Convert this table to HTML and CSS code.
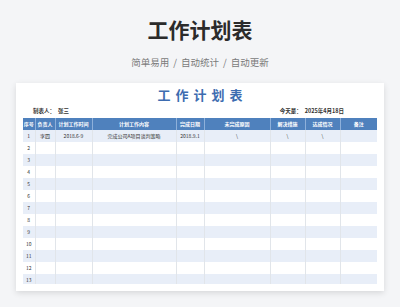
FILE: index.html
```html
<!DOCTYPE html>
<html lang="zh">
<head>
<meta charset="utf-8">
<link rel="stylesheet" href="styles.css">
</head>
<body>
<header class="hero">
  <h1 class="hero-title">工作计划表</h1>
  <p class="hero-sub"><span>简单易用</span><span class="sep">/</span><span>自动统计</span><span class="sep">/</span><span>自动更新</span></p>
</header>
<main class="card">
  <h2 class="sheet-title">工作计划表</h2>
  <div class="meta">
    <div class="meta-item"><span class="label">制表人：</span><span>张三</span></div>
    <div class="meta-item"><span class="label">今天是：</span><span>2025年4月18日</span></div>
  </div>
  <div class="table-wrap">
    <table class="sheet">
      <colgroup>
        <col style="width:12px"><col style="width:20px"><col style="width:37px"><col style="width:84px"><col style="width:28px"><col style="width:66px"><col style="width:35px"><col style="width:35px"><col style="width:37px">
      </colgroup>
      <thead>
        <tr><th>序号</th><th>负责人</th><th>计划工作时间</th><th>计划工作内容</th><th>完成日期</th><th>未完成原因</th><th>解决措施</th><th>达成情况</th><th>备注</th></tr>
      </thead>
      <tbody>
        <tr><td>1</td><td>李四</td><td>2018.6-9</td><td>完成公司A项目谈判策略</td><td>2018.9.1</td><td>\</td><td>\</td><td>\</td><td></td></tr>
        <tr><td>2</td><td></td><td></td><td></td><td></td><td></td><td></td><td></td><td></td></tr>
        <tr><td>3</td><td></td><td></td><td></td><td></td><td></td><td></td><td></td><td></td></tr>
        <tr><td>4</td><td></td><td></td><td></td><td></td><td></td><td></td><td></td><td></td></tr>
        <tr><td>5</td><td></td><td></td><td></td><td></td><td></td><td></td><td></td><td></td></tr>
        <tr><td>6</td><td></td><td></td><td></td><td></td><td></td><td></td><td></td><td></td></tr>
        <tr><td>7</td><td></td><td></td><td></td><td></td><td></td><td></td><td></td><td></td></tr>
        <tr><td>8</td><td></td><td></td><td></td><td></td><td></td><td></td><td></td><td></td></tr>
        <tr><td>9</td><td></td><td></td><td></td><td></td><td></td><td></td><td></td><td></td></tr>
        <tr><td>10</td><td></td><td></td><td></td><td></td><td></td><td></td><td></td><td></td></tr>
        <tr><td>11</td><td></td><td></td><td></td><td></td><td></td><td></td><td></td><td></td></tr>
        <tr><td>12</td><td></td><td></td><td></td><td></td><td></td><td></td><td></td><td></td></tr>
        <tr><td>13</td><td></td><td></td><td></td><td></td><td></td><td></td><td></td><td></td></tr>
      </tbody>
    </table>
  </div>
</main>
</body>
</html>
```
FILE: styles.css
```css
* { box-sizing: border-box; margin: 0; padding: 0; }
html, body { width: 400px; height: 307px; overflow: hidden; }
body {
  background: #f4f5f7;
  font-family: "Noto Sans CJK SC", "Noto Sans", sans-serif;
  color: #333;
}
.hero { padding-top: 19px; text-align: center; }
.hero-title {
  font-size: 21px;
  line-height: 21px;
  font-weight: 700;
  color: #2b2b2b;
}
.hero-sub {
  margin-top: 16px;
  font-size: 9.5px;
  line-height: 12px;
  color: #7a7a7a;
  display: flex;
  justify-content: center;
}
.hero-sub .sep { margin: 0 4px; }
.card {
  margin: 15px 16px 0;
  height: 208px;
  background: #fff;
  padding: 5px 7px 0;
  box-shadow: 0 2px 6px rgba(0,0,0,0.12);
}
.sheet-title {
  font-size: 13px;
  line-height: 14px;
  font-weight: 700;
  color: #3d6cb0;
  text-align: center;
  letter-spacing: 5px;
  padding-left: 5px;
}
.meta {
  margin-top: 5px;
  height: 8px;
  display: flex;
  justify-content: space-between;
  padding: 0 33px 0 10px;
  font-size: 5.5px;
  line-height: 8px;
  font-weight: 700;
  color: #333;
}
.meta .label { margin-right: 3px; }
.table-wrap {
  margin-top: 3px;
  height: 166px;
  overflow: hidden;
}
.sheet {
  width: 354px;
  table-layout: fixed;
  border-collapse: collapse;
  font-size: 5px;
  text-align: center;
}
.sheet th, .sheet td {
  height: 12px;
  padding: 0;
  line-height: 12px;
  white-space: nowrap;
  overflow: hidden;
}
.sheet th {
  background: #4f81bd;
  color: #fff;
  font-weight: 700;
  border-left: 1px solid #8eb0da;
}
.sheet th:first-child { border-left: none; }
.sheet td {
  color: #333;
  border-left: 1px solid #e1e5ea;
}
.sheet td:first-child { border-left: none; }
.sheet tbody tr:nth-child(odd) td { background: #e8eef8; }
.sheet tbody tr:nth-child(even) td { background: #fff; }
```
